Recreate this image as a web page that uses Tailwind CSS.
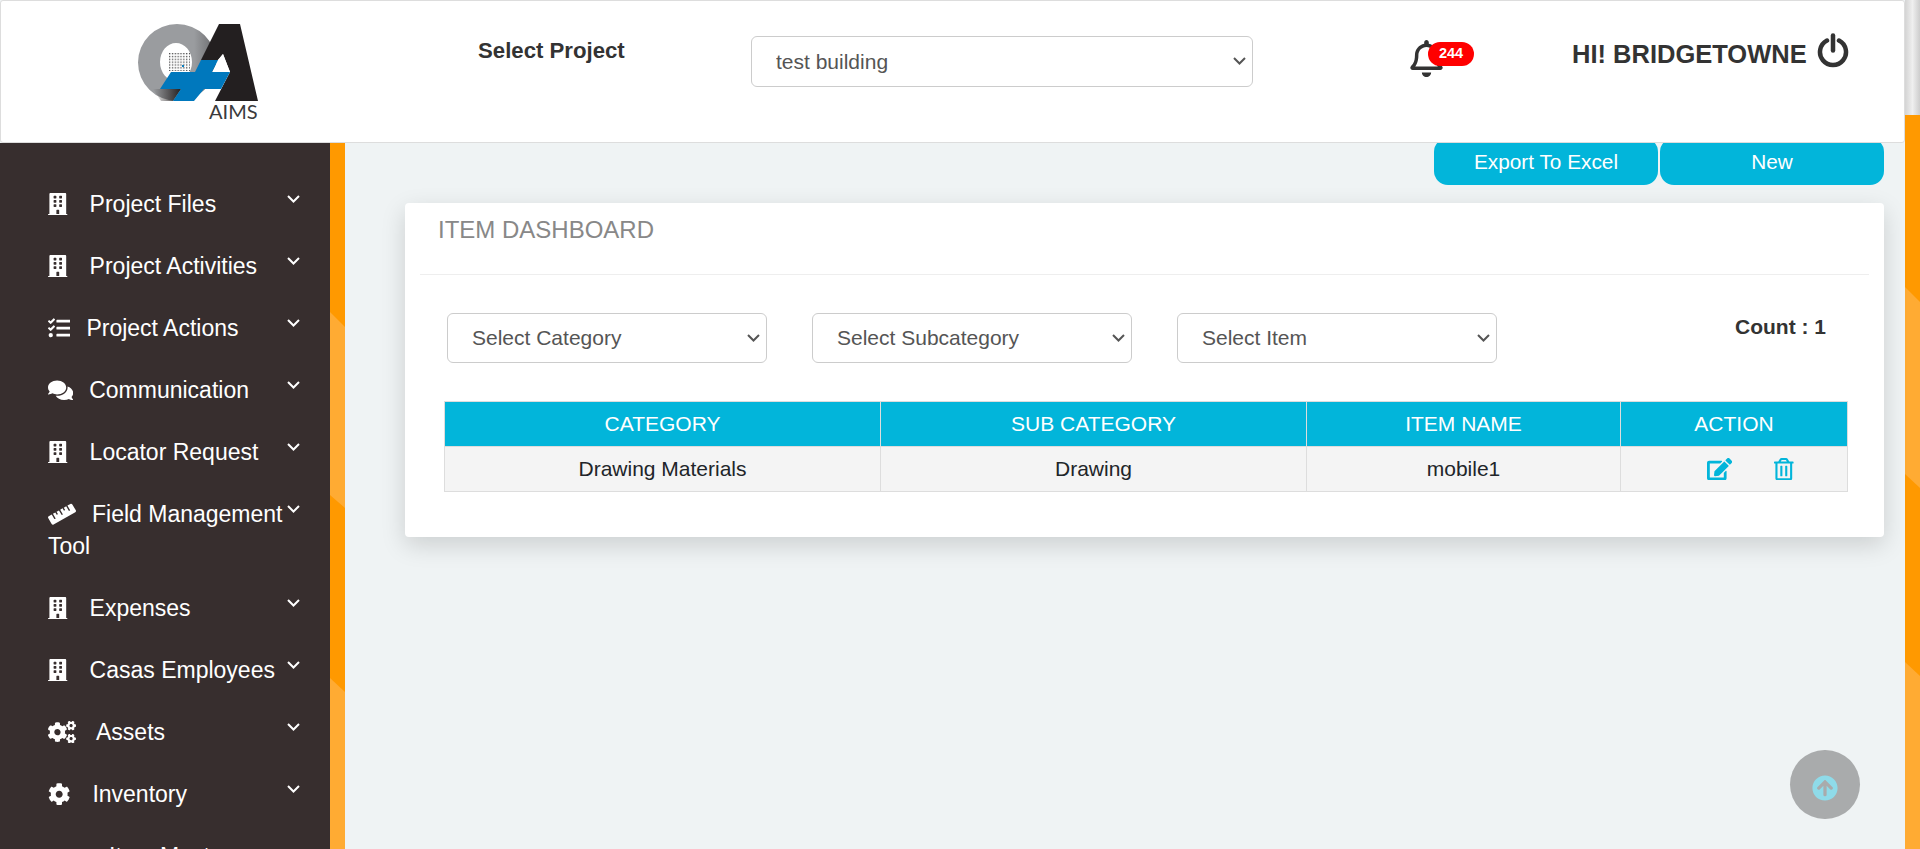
<!DOCTYPE html>
<html lang="en">
<head>
  <meta charset="UTF-8" />
  <title>Item Dashboard</title>
  <script src="https://cdn.jsdelivr.net/npm/@tailwindcss/browser@4"></script>
</head>
<body class="h-screen overflow-hidden bg-[#eff3f4] font-['Liberation_Sans',Arial,sans-serif]">
<!-- Shared icons -->
<svg class="hidden">
  <symbol id="i-building" viewBox="0 0 448 512"><path d="M436 480h-20V24c0-13.255-10.745-24-24-24H56C42.745 0 32 10.745 32 24v456H12c-6.627 0-12 5.373-12 12v20h448v-20c0-6.627-5.373-12-12-12zM128 76c0-6.627 5.373-12 12-12h40c6.627 0 12 5.373 12 12v40c0 6.627-5.373 12-12 12h-40c-6.627 0-12-5.373-12-12V76zm0 96c0-6.627 5.373-12 12-12h40c6.627 0 12 5.373 12 12v40c0 6.627-5.373 12-12 12h-40c-6.627 0-12-5.373-12-12v-40zm52 148h-40c-6.627 0-12-5.373-12-12v-40c0-6.627 5.373-12 12-12h40c6.627 0 12 5.373 12 12v40c0 6.627-5.373 12-12 12zm76 160h-64v-84c0-6.627 5.373-12 12-12h40c6.627 0 12 5.373 12 12v84zm64-172c0 6.627-5.373 12-12 12h-40c-6.627 0-12-5.373-12-12v-40c0-6.627 5.373-12 12-12h40c6.627 0 12 5.373 12 12v40zm0-96c0 6.627-5.373 12-12 12h-40c-6.627 0-12-5.373-12-12v-40c0-6.627 5.373-12 12-12h40c6.627 0 12 5.373 12 12v40zm0-96c0 6.627-5.373 12-12 12h-40c-6.627 0-12-5.373-12-12V76c0-6.627 5.373-12 12-12h40c6.627 0 12 5.373 12 12v40z" /></symbol>
  <symbol id="i-chevron" viewBox="0 0 13 8"><path fill="none" stroke="currentColor" stroke-width="2" d="M1 1l5.500 5.500L12 1" /></symbol>
</svg>

<div class="flex h-[849px] w-[1920px] overflow-hidden">
  <div class="flex w-[1905px] flex-col">

    <!-- Header -->
    <header class="relative z-10 flex h-[143px] shrink-0 items-start rounded-[3px] border border-[#ddd] bg-white">
      <svg class="ml-[136px] mt-[22px] h-[100px] w-[125px]" viewBox="136 22 125 100">
        <defs>
          <linearGradient id="ring" x1="0" y1="0" x2="1" y2="0">
            <stop offset="0" stop-color="#9a9c9f" />
            <stop offset="0.72" stop-color="#9a9c9f" />
            <stop offset="0.9" stop-color="#7a7b7e" />
            <stop offset="1" stop-color="#3a3738" />
          </linearGradient>
          <linearGradient id="fade" x1="0" y1="0" x2="1" y2="0">
            <stop offset="0" stop-color="#231f20" stop-opacity="0" />
            <stop offset="1" stop-color="#231f20" />
          </linearGradient>
          <pattern id="dots" x="168" y="52" width="2.85" height="2.85" patternUnits="userSpaceOnUse">
            <rect width="1.300" height="1.300" fill="#4a4a4c" />
          </pattern>
        </defs>
        <path fill="url(#ring)" fill-rule="evenodd" d="M176 23a39 38.500 0 1 0 0 77a39 38.500 0 1 0 0-77zM175 42a16 19 0 1 1 0 38a16 19 0 1 1 0-38z" />
        <polygon fill="url(#fade)" points="152,88 180,88 172,100 160,100" />
        <rect x="168" y="52" width="21" height="18" fill="url(#dots)" />
        <rect x="181" y="64" width="2" height="2" fill="#0a7fc0" />
        <polygon fill="#231f20" points="218,23 239,23 257,100 214,100 229,71 222,53 217,59 200,59" />
        <polygon fill="#fff" points="222,53 229,71 211,71 217,59" />
        <polygon fill="#0078bd" points="200,59 217,59 211,71 229,71 220,88 203,88 193,100 172,100 180,88 159,88 170,71 194,71" />
        <text x="208" y="118" font-size="20" fill="#3a3a3c" class="font-['Lato',sans-serif]">AIMS</text>
      </svg>
      <div class="ml-[216px] mt-[37px] w-[148px] text-[22.200px] leading-[26px] font-bold whitespace-nowrap text-[#333]">Select Project</div>
      <div class="relative ml-[125px] mt-[35px] w-[502px]">
        <select class="h-[51px] w-full appearance-none rounded-[6px] border border-[#ccc] bg-white pl-[24px] text-[21px] text-[#555]">
          <option>test building</option>
        </select>
        <svg class="absolute right-[7px] top-[21px] h-[8px] w-[13px] text-[#555]"><use href="#i-chevron" /></svg>
      </div>
      <div class="relative ml-[157px] mt-[39px] h-[37px] w-[33px]">
        <svg class="h-[37px] w-[33px] fill-[#333]" viewBox="0 0 448 512"><path d="M439.39 362.29c-19.32-20.76-55.47-51.99-55.47-154.29 0-77.7-54.48-139.9-127.94-155.16V32c0-17.67-14.32-32-31.98-32s-31.98 14.33-31.98 32v20.84C118.56 68.1 64.08 130.3 64.08 208c0 102.3-36.15 133.53-55.47 154.29-6 6.45-8.66 14.16-8.61 21.71.11 16.4 12.98 32 32.1 32h383.8c19.12 0 32-15.6 32.1-32 .05-7.55-2.61-15.27-8.61-21.71zM67.53 368c21.22-27.97 44.42-74.33 44.53-159.42 0-.2-.06-.38-.06-.58 0-61.86 50.14-112 112-112s112 50.14 112 112c0 .2-.06.38-.06.58.11 85.1 23.31 131.46 44.53 159.42H67.53zM224 512c35.32 0 63.97-28.65 63.97-64H160.03c0 35.35 28.65 64 63.97 64z" /></svg>
        <span class="absolute left-[18px] top-[2px] flex h-[24px] w-[46px] items-center justify-center rounded-full bg-[#ff0000] text-[14.500px] font-bold text-white">244</span>
      </div>
      <div class="ml-[129px] mt-[39px] w-[233px] text-[25.500px] leading-[28px] font-bold whitespace-nowrap text-[#333]">HI! BRIDGETOWNE</div>
      <svg class="ml-[12px] mt-[32px] h-[35px] w-[32px]" viewBox="-1 0 32 35" fill="none" stroke="#333" stroke-width="4.500" stroke-linecap="round"><path d="M9 7.500a13 13 0 1 0 12 0" /><path d="M15 2.500v15" /></svg>
    </header>

    <div class="flex min-h-0 flex-1">
      <!-- Sidebar -->
      <nav class="w-[330px] shrink-0 overflow-hidden bg-[#372e2e] pl-[48px] pt-[45px] text-[23px] leading-[32px] text-white">
        <div class="mb-[30px] flex">
          <div class="w-[239px]"><svg class="mr-[22px] inline-block h-[22.400px] w-[19.600px] fill-white align-[-3px]"><use href="#i-building" /></svg>Project Files</div>
          <svg class="mt-[7px] h-[8px] w-[13px] shrink-0"><use href="#i-chevron" /></svg>
        </div>
        <div class="mb-[30px] flex">
          <div class="w-[239px]"><svg class="mr-[22px] inline-block h-[22.400px] w-[19.600px] fill-white align-[-3px]"><use href="#i-building" /></svg>Project Activities</div>
          <svg class="mt-[7px] h-[8px] w-[13px] shrink-0"><use href="#i-chevron" /></svg>
        </div>
        <div class="mb-[30px] flex">
          <div class="w-[239px]"><svg class="mr-[16px] inline-block h-[22.400px] w-[22.400px] fill-white align-[-3px]" viewBox="0 0 512 512"><path d="M139.61 35.5a12 12 0 0 0-17 0L58.93 98.81l-22.7-22.12a12 12 0 0 0-17 0L3.53 92.41a12 12 0 0 0 0 17l47.59 47.4a12.78 12.78 0 0 0 17.61 0l15.59-15.62L156.52 69a12.09 12.09 0 0 0 .09-17zm0 159.19a12 12 0 0 0-17 0l-63.68 63.72-22.7-22.1a12 12 0 0 0-17 0L3.53 252a12 12 0 0 0 0 17L51 316.5a12.77 12.77 0 0 0 17.6 0l15.7-15.69 72.2-72.22a12 12 0 0 0 .09-16.9zM64 368c-26.49 0-48.59 21.5-48.59 48S37.53 464 64 464a48 48 0 0 0 0-96zm432 16H208a16 16 0 0 0-16 16v32a16 16 0 0 0 16 16h288a16 16 0 0 0 16-16v-32a16 16 0 0 0-16-16zm0-320H208a16 16 0 0 0-16 16v32a16 16 0 0 0 16 16h288a16 16 0 0 0 16-16V80a16 16 0 0 0-16-16zm0 160H208a16 16 0 0 0-16 16v32a16 16 0 0 0 16 16h288a16 16 0 0 0 16-16v-32a16 16 0 0 0-16-16z" /></svg>Project Actions</div>
          <svg class="mt-[7px] h-[8px] w-[13px] shrink-0"><use href="#i-chevron" /></svg>
        </div>
        <div class="mb-[30px] flex">
          <div class="w-[239px]"><svg class="mr-[16px] inline-block h-[22.400px] w-[25.200px] fill-white align-[-3px]" viewBox="0 0 576 512"><path d="M416 192c0-88.4-93.1-160-208-160S0 103.6 0 192c0 34.3 14.1 65.9 38 92-13.4 30.2-35.5 54.2-35.8 54.5-2.2 2.3-2.8 5.7-1.5 8.7S4.8 352 8 352c36.6 0 66.9-12.3 88.7-25 32.2 15.7 70.3 25 111.3 25 114.9 0 208-71.6 208-160zm122 220c23.9-26 38-57.7 38-92 0-66.9-53.5-124.2-129.3-148.1.9 6.6 1.3 13.3 1.3 20.1 0 105.9-107.7 192-240 192-10.8 0-21.3-.8-31.7-1.9C207.8 439.6 281.8 480 368 480c41 0 79.1-9.2 111.3-25 21.8 12.7 52.1 25 88.7 25 3.2 0 6.1-1.9 7.3-4.8 1.3-2.9.7-6.3-1.5-8.7-.3-.3-22.4-24.2-35.8-54.5z" /></svg>Communication</div>
          <svg class="mt-[7px] h-[8px] w-[13px] shrink-0"><use href="#i-chevron" /></svg>
        </div>
        <div class="mb-[30px] flex">
          <div class="w-[239px]"><svg class="mr-[22px] inline-block h-[22.400px] w-[19.600px] fill-white align-[-3px]"><use href="#i-building" /></svg>Locator Request</div>
          <svg class="mt-[7px] h-[8px] w-[13px] shrink-0"><use href="#i-chevron" /></svg>
        </div>
        <div class="mb-[30px] flex">
          <div class="w-[239px]"><svg class="mr-[16px] inline-block h-[22.400px] w-[28px] fill-white align-[-3px]" viewBox="0 0 640 512"><path d="M635.7 167.2L556.1 31.700c-8.800-15-28.300-20.100-43.500-11.500l-69 39.100L503.300 161c2.200 3.800.9 8.500-2.900 10.700l-13.800 7.800c-3.800 2.200-8.700.9-10.900-2.900L416 75l-55.200 31.300 27.900 47.400c2.200 3.800.9 8.500-2.900 10.700l-13.800 7.800c-3.800 2.200-8.700.9-10.900-2.900L333.200 122 278 153.300 337.800 255c2.200 3.700.9 8.500-2.900 10.700l-13.800 7.800c-3.800 2.200-8.700.9-10.900-2.900l-59.800-101.700-55.200 31.300 27.900 47.400c2.200 3.800.9 8.500-2.900 10.700l-13.800 7.800c-3.800 2.200-8.700.9-10.900-2.900l-27.900-47.500-55.200 31.300 59.800 101.700c2.200 3.700.9 8.500-2.900 10.700l-13.800 7.800c-3.800 2.200-8.700.9-10.900-2.900L84.900 262.900l-69 39.100C.7 310.700-4.600 329.800 4.200 344.800l79.600 135.600c8.800 15 28.300 20.100 43.500 11.500L624.100 210c15.200-8.600 20.400-27.800 11.600-42.800z" /></svg>Field Management Tool</div>
          <svg class="mt-[7px] h-[8px] w-[13px] shrink-0"><use href="#i-chevron" /></svg>
        </div>
        <div class="mb-[30px] flex">
          <div class="w-[239px]"><svg class="mr-[22px] inline-block h-[22.400px] w-[19.600px] fill-white align-[-3px]"><use href="#i-building" /></svg>Expenses</div>
          <svg class="mt-[7px] h-[8px] w-[13px] shrink-0"><use href="#i-chevron" /></svg>
        </div>
        <div class="mb-[30px] flex">
          <div class="w-[239px]"><svg class="mr-[22px] inline-block h-[22.400px] w-[19.600px] fill-white align-[-3px]"><use href="#i-building" /></svg>Casas Employees</div>
          <svg class="mt-[7px] h-[8px] w-[13px] shrink-0"><use href="#i-chevron" /></svg>
        </div>
        <div class="mb-[30px] flex">
          <div class="w-[239px]"><svg class="mr-[20px] inline-block h-[22.400px] w-[28px] fill-white align-[-3px]" viewBox="0 0 640 512"><path d="M512.1 191l-8.2 14.3c-3 5.300-9.400 7.500-15.100 5.400-11.800-4.400-22.600-10.700-32.100-18.600-4.600-3.800-5.800-10.500-2.800-15.700l8.200-14.300c-6.900-8-12.300-17.300-15.900-27.400h-16.500c-6 0-11.200-4.300-12.200-10.300-2-12-2.100-24.600 0-37.100 1-6 6.200-10.400 12.200-10.400h16.500c3.600-10.100 9-19.400 15.900-27.400l-8.200-14.300c-3-5.200-1.900-11.900 2.800-15.700 9.500-7.900 20.400-14.200 32.100-18.600 5.700-2.100 12.100.1 15.100 5.400l8.200 14.300c10.500-1.900 21.200-1.900 31.700 0L552 6.300c3-5.300 9.400-7.500 15.100-5.400 11.800 4.400 22.600 10.700 32.100 18.600 4.600 3.800 5.800 10.500 2.800 15.700l-8.200 14.300c6.900 8 12.300 17.300 15.900 27.400h16.500c6 0 11.200 4.300 12.200 10.300 2 12 2.100 24.600 0 37.100-1 6-6.200 10.400-12.200 10.400h-16.500c-3.600 10.100-9 19.400-15.900 27.400l8.200 14.300c3 5.200 1.900 11.900-2.800 15.700-9.500 7.900-20.400 14.200-32.100 18.600-5.700 2.100-12.100-.1-15.100-5.400l-8.200-14.300c-10.400 1.900-21.200 1.900-31.700 0zm-10.500-58.800c38.500 29.600 82.400-14.300 52.800-52.800-38.500-29.700-82.400 14.300-52.800 52.800zM386.300 286.100l33.700 16.800c10.100 5.800 14.500 18.100 10.500 29.100-8.900 24.200-26.400 46.400-42.600 65.800-7.400 8.900-20.200 11.100-30.300 5.300l-29.100-16.800c-16 13.700-34.600 24.600-54.900 31.700v33.600c0 11.600-8.300 21.600-19.700 23.600-24.600 4.200-50.400 4.400-75.900 0-11.500-2-20-11.900-20-23.600V418c-20.300-7.200-38.900-18-54.900-31.700L74 403c-10 5.800-22.900 3.600-30.300-5.300-16.200-19.400-33.300-41.600-42.200-65.700-4-10.900.4-23.200 10.500-29.100l33.300-16.800c-3.900-20.900-3.900-42.400 0-63.400L12 205.800c-10.100-5.800-14.600-18.100-10.500-29 8.900-24.200 26-46.400 42.200-65.800 7.400-8.900 20.200-11.100 30.300-5.300l29.100 16.800c16-13.700 34.600-24.600 54.900-31.700V57.100c0-11.500 8.200-21.500 19.600-23.500 24.600-4.200 50.500-4.400 76-.1 11.500 2 20 11.900 20 23.600v33.600c20.300 7.200 38.900 18 54.900 31.700l29.100-16.800c10-5.800 22.900-3.600 30.300 5.300 16.200 19.400 33.200 41.600 42.100 65.800 4 10.900.1 23.200-10 29.100l-33.700 16.800c3.900 21 3.900 42.500 0 63.500zm-117.600 21.100c59.200-77-28.700-164.900-105.700-105.700-59.200 77 28.700 164.900 105.700 105.700zm243.400 182.700l-8.200 14.300c-3 5.300-9.400 7.500-15.100 5.400-11.800-4.400-22.600-10.700-32.100-18.600-4.600-3.800-5.800-10.500-2.800-15.700l8.200-14.300c-6.900-8-12.300-17.300-15.900-27.400h-16.500c-6 0-11.200-4.300-12.200-10.300-2-12-2.100-24.600 0-37.100 1-6 6.200-10.400 12.200-10.400h16.500c3.600-10.100 9-19.400 15.900-27.400l-8.200-14.300c-3-5.200-1.900-11.900 2.800-15.700 9.500-7.900 20.400-14.200 32.100-18.600 5.700-2.100 12.100.1 15.100 5.400l8.200 14.300c10.500-1.900 21.200-1.900 31.700 0l8.200-14.300c3-5.300 9.400-7.500 15.100-5.400 11.800 4.400 22.600 10.700 32.100 18.600 4.600 3.800 5.800 10.500 2.800 15.700l-8.200 14.300c6.900 8 12.300 17.300 15.900 27.400h16.500c6 0 11.200 4.300 12.200 10.300 2 12 2.100 24.600 0 37.100-1 6-6.200 10.400-12.200 10.400h-16.500c-3.600 10.100-9 19.400-15.900 27.400l8.200 14.300c3 5.200 1.900 11.900-2.800 15.700-9.500 7.900-20.400 14.200-32.100 18.600-5.700 2.100-12.100-.1-15.100-5.400l-8.200-14.300c-10.400 1.900-21.200 1.900-31.700 0zM501.600 431c38.500 29.600 82.400-14.300 52.800-52.800-38.500-29.600-82.400 14.300-52.800 52.800z" /></svg>Assets</div>
          <svg class="mt-[7px] h-[8px] w-[13px] shrink-0"><use href="#i-chevron" /></svg>
        </div>
        <div class="mb-[30px] flex">
          <div class="w-[239px]"><svg class="mr-[22px] inline-block h-[22.400px] w-[22.400px] fill-white align-[-3px]" viewBox="0 0 512 512"><path d="M487.4 315.7l-42.6-24.6c4.300-23.200 4.300-47 0-70.200l42.600-24.600c4.900-2.800 7.100-8.600 5.500-14-11.100-35.600-30-67.800-54.700-94.600-3.800-4.100-10-5.100-14.800-2.300L380.800 110c-17.900-15.400-38.500-27.300-60.800-35.100V25.800c0-5.600-3.900-10.500-9.400-11.700-36.700-8.200-74.300-7.800-109.200 0-5.500 1.200-9.400 6.100-9.400 11.700V75c-22.200 7.900-42.800 19.800-60.800 35.100L88.700 85.500c-4.900-2.800-11-1.900-14.800 2.300-24.700 26.700-43.600 58.900-54.700 94.600-1.700 5.400.6 11.200 5.500 14L67.300 221c-4.300 23.200-4.300 47 0 70.200l-42.600 24.600c-4.900 2.800-7.100 8.600-5.500 14 11.100 35.600 30 67.800 54.700 94.600 3.800 4.100 10 5.100 14.800 2.300l42.600-24.600c17.900 15.400 38.500 27.300 60.800 35.100v49.200c0 5.600 3.900 10.500 9.400 11.700 36.700 8.200 74.300 7.800 109.200 0 5.500-1.200 9.400-6.100 9.400-11.700v-49.200c22.200-7.900 42.800-19.800 60.800-35.100l42.600 24.600c4.900 2.800 11 1.900 14.800-2.300 24.700-26.700 43.600-58.900 54.700-94.600 1.500-5.500-.7-11.300-5.600-14.100zM256 336c-44.100 0-80-35.900-80-80s35.900-80 80-80 80 35.900 80 80-35.900 80-80 80z" /></svg>Inventory</div>
          <svg class="mt-[7px] h-[8px] w-[13px] shrink-0"><use href="#i-chevron" /></svg>
        </div>
        <div class="pl-[61px]">Item Master</div>
      </nav>

      <!-- Orange stripe beside the sidebar -->
      <svg class="h-[706px] w-[15px] shrink-0 bg-[#ff9900]" viewBox="0 0 15 706">
        <polygon fill="#ffab33" points="0,169 15,184 15,365 0,352" />
        <polygon fill="#ffab33" points="0,535 15,549 15,706 0,706" />
      </svg>

      <!-- Main -->
      <main class="relative min-w-0 flex-1">
        <div class="-mt-[5px] flex justify-end gap-[2px] pr-[21px]">
          <button class="h-[47px] w-[224px] rounded-[14px] bg-[#02b5da] text-[20.800px] text-white">Export To Excel</button>
          <button class="h-[47px] w-[224px] rounded-[14px] bg-[#02b5da] text-[20.800px] text-white">New</button>
        </div>

        <section class="ml-[60px] mr-[21px] mt-[18px] rounded-[4px] bg-white pb-[45px] shadow-[0_8px_24px_rgba(0,0,0,0.15)]">
          <div class="mx-[15px] h-[72px] border-b border-[#eee] pl-[18px] pt-[13px] text-[24px] leading-[28px] text-[#888]">ITEM DASHBOARD</div>
          <div class="flex items-start gap-[45px] pl-[42px] pt-[38px]">
            <div class="relative w-[320px]">
              <select class="h-[50px] w-full appearance-none rounded-[6px] border border-[#ccc] bg-white pl-[24px] text-[21px] text-[#555]"><option>Select Category</option></select>
              <svg class="absolute right-[7px] top-[21px] h-[8px] w-[13px] text-[#555]"><use href="#i-chevron" /></svg>
            </div>
            <div class="relative w-[320px]">
              <select class="h-[50px] w-full appearance-none rounded-[6px] border border-[#ccc] bg-white pl-[24px] text-[21px] text-[#555]"><option>Select Subcategory</option></select>
              <svg class="absolute right-[7px] top-[21px] h-[8px] w-[13px] text-[#555]"><use href="#i-chevron" /></svg>
            </div>
            <div class="relative w-[320px]">
              <select class="h-[50px] w-full appearance-none rounded-[6px] border border-[#ccc] bg-white pl-[24px] text-[21px] text-[#555]"><option>Select Item</option></select>
              <svg class="absolute right-[7px] top-[21px] h-[8px] w-[13px] text-[#555]"><use href="#i-chevron" /></svg>
            </div>
            <div class="ml-[193px] text-[21px] leading-[28px] font-bold whitespace-nowrap text-[#333]">Count : 1</div>
          </div>
          <table class="ml-[39px] mt-[38px] w-[1403px] table-fixed border-collapse text-center text-[21px]">
            <colgroup><col class="w-[436px]" /><col class="w-[426px]" /><col class="w-[314px]" /><col class="w-[227px]" /></colgroup>
            <thead class="bg-[#02b5da] text-white">
              <tr class="h-[45px]">
                <th class="border border-[#ddd] font-normal">CATEGORY</th>
                <th class="border border-[#ddd] font-normal">SUB CATEGORY</th>
                <th class="border border-[#ddd] font-normal">ITEM NAME</th>
                <th class="border border-[#ddd] font-normal">ACTION</th>
              </tr>
            </thead>
            <tbody class="bg-[#f4f4f4] text-[#212529]">
              <tr class="h-[45px]">
                <td class="border border-[#ddd]">Drawing Materials</td>
                <td class="border border-[#ddd]">Drawing</td>
                <td class="border border-[#ddd]">mobile1</td>
                <td class="border border-[#ddd]">
                  <div class="flex items-center pl-[86px]">
                    <svg class="h-[22.400px] w-[25.200px] fill-[#02b5da]" viewBox="0 0 576 512"><path d="M402.6 83.2l90.2 90.2c3.800 3.800 3.800 10 0 13.800L274.400 405.600l-92.800 10.300c-12.400 1.400-22.900-9.100-21.500-21.500l10.300-92.800L388.800 83.200c3.800-3.800 10-3.800 13.800 0zm162-22.900l-48.800-48.800c-15.200-15.200-39.900-15.200-55.200 0l-35.400 35.400c-3.800 3.800-3.800 10 0 13.800l90.200 90.200c3.800 3.800 10 3.800 13.800 0l35.400-35.400c15.200-15.300 15.200-40 0-55.200zM384 346.200V448H64V128h229.800c3.200 0 6.200-1.300 8.500-3.500l40-40c7.600-7.600 2.200-20.500-8.500-20.500H48C21.500 64 0 85.500 0 112v352c0 26.500 21.500 48 48 48h352c26.500 0 48-21.500 48-48V306.200c0-10.700-12.900-16-20.500-8.500l-40 40c-2.200 2.300-3.500 5.300-3.500 8.500z" /></svg>
                    <svg class="ml-[42px] h-[22.400px] w-[19.600px] fill-[#02b5da]" viewBox="0 0 448 512"><path d="M268 416h24a12 12 0 0 0 12-12V188a12 12 0 0 0-12-12h-24a12 12 0 0 0-12 12v216a12 12 0 0 0 12 12zM432 80h-82.410l-34-56.700A48 48 0 0 0 274.410 0H173.590a48 48 0 0 0-41.160 23.300L98.410 80H16A16 16 0 0 0 0 96v16a16 16 0 0 0 16 16h16v336a48 48 0 0 0 48 48h288a48 48 0 0 0 48-48V128h16a16 16 0 0 0 16-16V96a16 16 0 0 0-16-16zM171.840 50.910A6 6 0 0 1 177 48h94a6 6 0 0 1 5.150 2.910L293.610 80H154.390zM368 464H80V128h288zm-212-48h24a12 12 0 0 0 12-12V188a12 12 0 0 0-12-12h-24a12 12 0 0 0-12 12v216a12 12 0 0 0 12 12z" /></svg>
                  </div>
                </td>
              </tr>
            </tbody>
          </table>
        </section>

        <!-- Scroll to top -->
        <button class="absolute left-[1445px] top-[607px] flex h-[69px] w-[70px] items-center justify-center rounded-full bg-[#a9abac] pt-[6px]">
          <svg class="h-[26px] w-[26px] fill-[#8fdbe9]" viewBox="0 0 512 512"><path d="M8 256C8 119 119 8 256 8s248 111 248 248-111 248-248 248S8 393 8 256zm143.600 28.900l72.400-75.500V392c0 13.300 10.700 24 24 24h16c13.300 0 24-10.700 24-24V209.400l72.400 75.500c9.300 9.700 24.800 9.900 34.300.4l10.900-11c9.400-9.400 9.400-24.600 0-33.900L273 107.700c-9.400-9.400-24.600-9.400-33.900 0L106.300 240.400c-9.400 9.400-9.400 24.600 0 33.900l10.900 11c9.600 9.500 25.100 9.300 34.400-.4z" /></svg>
        </button>
      </main>
    </div>
  </div>

  <!-- Page scrollbar on the orange background -->
  <div class="flex w-[15px] shrink-0 flex-col">
    <div class="h-[115px] shrink-0 bg-linear-to-r from-[#d4d4d4] via-[#efefef] to-[#cdcdcd]"></div>
    <svg class="h-[734px] w-[15px] bg-[#ff9900]" viewBox="0 0 15 734">
      <polygon fill="#ffab33" points="0,172 15,187 15,373 0,359" />
      <polygon fill="#ffab33" points="0,547 15,561 15,734 0,734" />
    </svg>
  </div>
</div>
</body>
</html>
